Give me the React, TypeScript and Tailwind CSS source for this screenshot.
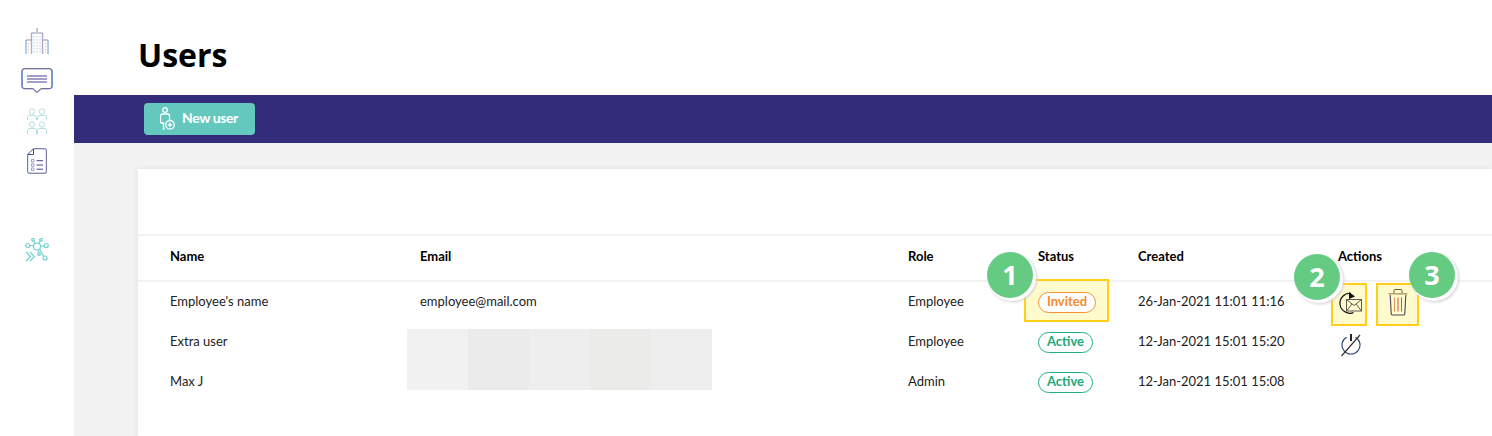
import React from "react"

const Fringe = ({ children, width }: { children: React.ReactNode; width?: number }) => (
  <g fill="none" strokeWidth={width ?? 1}>
    <g stroke="#f0b27a" transform="translate(-0.5 0)">{children}</g>
    <g stroke="#7cc4ee" transform="translate(0.5 0)">{children}</g>
    <g stroke="#5d5296">{children}</g>
  </g>
)

const BuildingIcon = () => (
  <svg width="24" height="27" viewBox="0 0 24 27" className="block">
    <path d="M9 8v17M12 8v17M15 8v17M3.500 15v10M20.500 15v10" stroke="#c9c5dc" strokeWidth="1" strokeDasharray="1.500 1.500" fill="none" />
    <g opacity="0.7">
      <Fringe width={0.6}>
        <path d="M12 0v4M6.500 26V5h11v21M6.500 12H1v14M17.500 12H23v14" />
      </Fringe>
    </g>
  </svg>
)

const ChatIcon = () => (
  <svg width="32" height="26" viewBox="0 0 32 26" className="block">
    <Fringe width={0.9}>
      <path d="M3.500.700h25a2.500 2.500 0 0 1 2.500 2.500v15a2.500 2.500 0 0 1-2.500 2.500H20l-4 3.800-4-3.800H3.500A2.500 2.500 0 0 1 1 18.200v-15A2.500 2.500 0 0 1 3.500.700z" />
    </Fringe>
    <path d="M6 8h20M6 11h20M6 14h20" stroke="#4a3f8f" strokeWidth="1" fill="none" />
  </svg>
)

const PeopleIcon = () => (
  <svg width="20" height="27" viewBox="0 0 20 27" fill="none" stroke="#b5dfdc" strokeWidth="1" className="block">
    <circle cx="5" cy="3.500" r="2.700" />
    <circle cx="15" cy="3.500" r="2.700" />
    <path d="M.500 12V9.500a2 2 0 0 1 2-2h5a2 2 0 0 1 2 2V12M10.500 12V9.500a2 2 0 0 1 2-2h5a2 2 0 0 1 2 2V12" />
    <circle cx="5" cy="16.500" r="2.700" />
    <circle cx="15" cy="16.500" r="2.700" />
    <path d="M.500 26.500v-4a2 2 0 0 1 2-2h5a2 2 0 0 1 2 2v4M10.500 26.500v-4a2 2 0 0 1 2-2h5a2 2 0 0 1 2 2v4" />
  </svg>
)

const DocIcon = () => (
  <svg width="20" height="26" viewBox="0 0 20 26" className="block">
    <Fringe width={0.7}>
      <path d="M6.500.700H17.500a2 2 0 0 1 2 2v20.600a2 2 0 0 1-2 2h-15a2 2 0 0 1-2-2V6.500z" />
    </Fringe>
    <path d="M6.500 1v5.500H1" stroke="#4a3f8f" strokeWidth="1" fill="none" />
    <path d="M4.500 11.500h2.500v2.500H4.500zM4.500 15.800h2.500v2.500H4.500zM4.500 20h2.500v2.500H4.500z" stroke="#8f88b8" strokeWidth="0.8" fill="none" />
    <path d="M9.500 12.700h6.500M9.500 17h6.500M9.500 21.200h6.500" stroke="#4a3f8f" strokeWidth="1" fill="none" />
  </svg>
)

const NetworkIcon = () => (
  <svg width="24" height="25" viewBox="0 0 24 25" fill="none" stroke="#6fd0d4" strokeWidth="1.200" className="block">
    <circle cx="12" cy="8.500" r="3.500" />
    <circle cx="2.700" cy="7.500" r="2" />
    <circle cx="21.300" cy="7.500" r="2" />
    <circle cx="8" cy="1.800" r="1.300" />
    <circle cx="16" cy="1.800" r="1.300" />
    <circle cx="14" cy="16" r="1.300" />
    <circle cx="20" cy="20" r="2" />
    <path d="M4.700 7.500h3.800M15.500 8h3.800M8.600 3l2 2.500M15.400 3l-2 2.500M13 12l1 2.700M14.800 11.500l4 7" />
    <path d="M1 14l4.500 4.500L1 23M5 14l4.500 4.500L5 23" />
  </svg>
)

const NewUserIcon = () => (
  <svg width="15" height="24" viewBox="0 0 15 24" fill="none" stroke="#ffffff" strokeWidth="1.300" className="block">
    <circle cx="5" cy="3" r="2.300" />
    <path d="M4.500 22h-1V16H1.500a1 1 0 0 1-1-1V9a2 2 0 0 1 2-2h5a2 2 0 0 1 2 2v4" />
    <circle cx="10" cy="17.800" r="4.300" />
    <path d="M7.800 17.800h4.400M10 15.600v4.400" />
  </svg>
)

const ResendIcon = () => (
  <svg width="26" height="26" viewBox="0 0 26 26" fill="none" className="block">
    <path d="M15 1.300a10 10 0 1 0 2.500 19.300" stroke="#111111" strokeWidth="1.200" />
    <path d="M13 0l6 4.500-6 2.500z" fill="#111111" />
    <g stroke="#5a5a5a" strokeWidth="1">
      <rect x="10.500" y="7.500" width="15" height="11.500" fill="#fffbcc" />
      <path d="M10.500 7.500l7.500 6 7.500-6M10.500 19l5.500-7M25.500 19l-5.500-7" />
    </g>
  </svg>
)

const TrashIcon = () => (
  <svg width="20" height="27" viewBox="0 0 20 27" className="block">
    <path d="M.500 4.800h19" stroke="#b3a06a" strokeWidth="1.500" fill="none" />
    <path d="M6 4V1.500a1 1 0 0 1 1-1h6a1 1 0 0 1 1 1V4" stroke="#6e5c44" strokeWidth="1" fill="none" />
    <path d="M2.200 6l1 18.500a1.500 1.500 0 0 0 1.500 1.500h10.600a1.500 1.500 0 0 0 1.500-1.500l1-18.500" stroke="#4f4560" strokeWidth="1.100" fill="none" />
    <path d="M6.500 8.500v14" stroke="#d98a4a" strokeWidth="0.900" />
    <path d="M10 8.500v14" stroke="#b8433c" strokeWidth="0.900" />
    <path d="M13.500 8.500v14" stroke="#6d5aa8" strokeWidth="0.900" />
  </svg>
)

const PowerOffIcon = () => (
  <svg width="20" height="24" viewBox="0 0 20 24" fill="none" className="block">
    <path d="M5.500 4.200a9 9 0 1 0 9 0" stroke="#2f4a7a" strokeWidth="1.200" />
    <path d="M10 1v7" stroke="#111111" strokeWidth="1.800" />
    <path d="M19 2L.500 23" stroke="#3f342a" strokeWidth="1.200" />
  </svg>
)

const Badge = ({ label }: { label: string }) => {
  const color =
    label === "Invited"
      ? "border-[#f59331] text-[#f58a2c] w-[58px]"
      : "border-[#21b27c] text-[#21a878] w-[55px]"
  return (
    <span className={`flex h-[21px] items-center justify-center rounded-full border bg-white text-[13px] font-bold ${color}`}>
      {label}
    </span>
  )
}

const Marker = ({ n, className }: { n: number; className: string }) => (
  <div
    className={`absolute flex h-[46px] w-[46px] items-center justify-center rounded-full bg-[#65cb82] text-[27px] font-bold text-white shadow-[2px_2px_0_1px_#ffffff,3px_3px_3px_1px_#cfcfcf] font-['Open_Sans',sans-serif] ${className}`}
  >
    {n}
  </div>
)

const rows = [
  { name: "Employee's name", email: "employee@mail.com", role: "Employee", status: "Invited", created: "26-Jan-2021 11:01 11:16" },
  { name: "Extra user", email: "", role: "Employee", status: "Active", created: "12-Jan-2021 15:01 15:20" },
  { name: "Max J", email: "", role: "Admin", status: "Active", created: "12-Jan-2021 15:01 15:08" },
]

const gridCols = "grid grid-cols-[250px_488px_130px_100px_200px_1fr]"

export default function App() {
  return (
    <div className="relative flex h-[436px] w-[1492px] overflow-hidden bg-white font-['Lato',sans-serif] text-[13px] text-[#222222]">
      {/* Sidebar */}
      <aside className="flex w-[74px] shrink-0 flex-col items-center bg-white pt-[28px]">
        <BuildingIcon />
        <div className="mt-[13px]"><ChatIcon /></div>
        <div className="mt-[14px]"><PeopleIcon /></div>
        <div className="mt-[13px]"><DocIcon /></div>
        <div className="mt-[64px]"><NetworkIcon /></div>
      </aside>

      <main className="flex min-w-0 flex-1 flex-col bg-[#f2f2f2]">
        <header className="flex h-[95px] items-start bg-white pl-[64px] pt-[33px]">
          <h1 className="font-['Open_Sans',sans-serif] text-[32px] font-bold leading-[44px] text-black">Users</h1>
        </header>

        <div className="flex h-[48px] items-center bg-[#332c78] pl-[70px]">
          <button className="flex h-[32px] w-[111px] items-center gap-[7px] rounded-[4px] bg-[#65c8bf] pl-[16px] text-[14px] font-bold tracking-[-0.4px] text-white">
            <NewUserIcon />
            <span className="pb-[4px]">New user</span>
          </button>
        </div>

        {/* Card */}
        <div className="mt-[26px] ml-[64px] flex-1 bg-white shadow-[0_0_6px_rgba(0,0,0,0.08)]">
          <div className="h-[67px] border-b-2 border-[#f2f2f2]" />
          <div className={`${gridCols} h-[46px] items-center border-b-2 border-[#f2f2f2] pb-[2px] pl-[32px] font-bold text-black`}>
            <div>Name</div>
            <div>Email</div>
            <div>Role</div>
            <div>Status</div>
            <div>Created</div>
            <div>Actions</div>
          </div>
          <div className="relative">
            {rows.map((row, i) => (
              <div key={row.name} className={`${gridCols} h-[40px] items-center pl-[32px]`}>
                <div>{row.name}</div>
                <div>{row.email}</div>
                <div>{row.role}</div>
                <div className="relative">
                  {i === 0 && (
                    <div className="absolute left-[-14px] top-[-13px] h-[43px] w-[85px] border-2 border-[#ffcf1a] bg-[#fffbcc]" />
                  )}
                  <div className="relative"><Badge label={row.status} /></div>
                </div>
                <div>{row.created}</div>
                <div className="relative">
                  {i === 0 && (
                    <>
                      <div className="absolute left-[-7px] top-[-19px] flex h-[43px] w-[36px] items-center justify-center border-2 border-[#ffcf1a] bg-[#fffbcc]">
                        <ResendIcon />
                      </div>
                      <div className="absolute left-[38px] top-[-19px] flex h-[43px] w-[43px] items-center justify-center border-2 border-[#ffcf1a] bg-[#fffbcc] pb-[5px]">
                        <TrashIcon />
                      </div>
                    </>
                  )}
                  {i === 1 && (
                    <div className="absolute left-[3px] top-[-9px]"><PowerOffIcon /></div>
                  )}
                </div>
              </div>
            ))}
            {/* hidden emails */}
            <div className="absolute left-[269px] top-[47px] flex h-[61px] w-[305px]">
              <div className="flex-1 bg-[#f1f1f1]" />
              <div className="flex-1 bg-[#ebebeb]" />
              <div className="flex-1 bg-[#eeeeee]" />
              <div className="flex-1 bg-[#ebebe9]" />
              <div className="flex-1 bg-[#eeeeee]" />
            </div>
          </div>
        </div>
      </main>

      <Marker n={1} className="left-[987px] top-[252px]" />
      <Marker n={2} className="left-[1294px] top-[254px]" />
      <Marker n={3} className="left-[1409px] top-[252px]" />
    </div>
  )
}
